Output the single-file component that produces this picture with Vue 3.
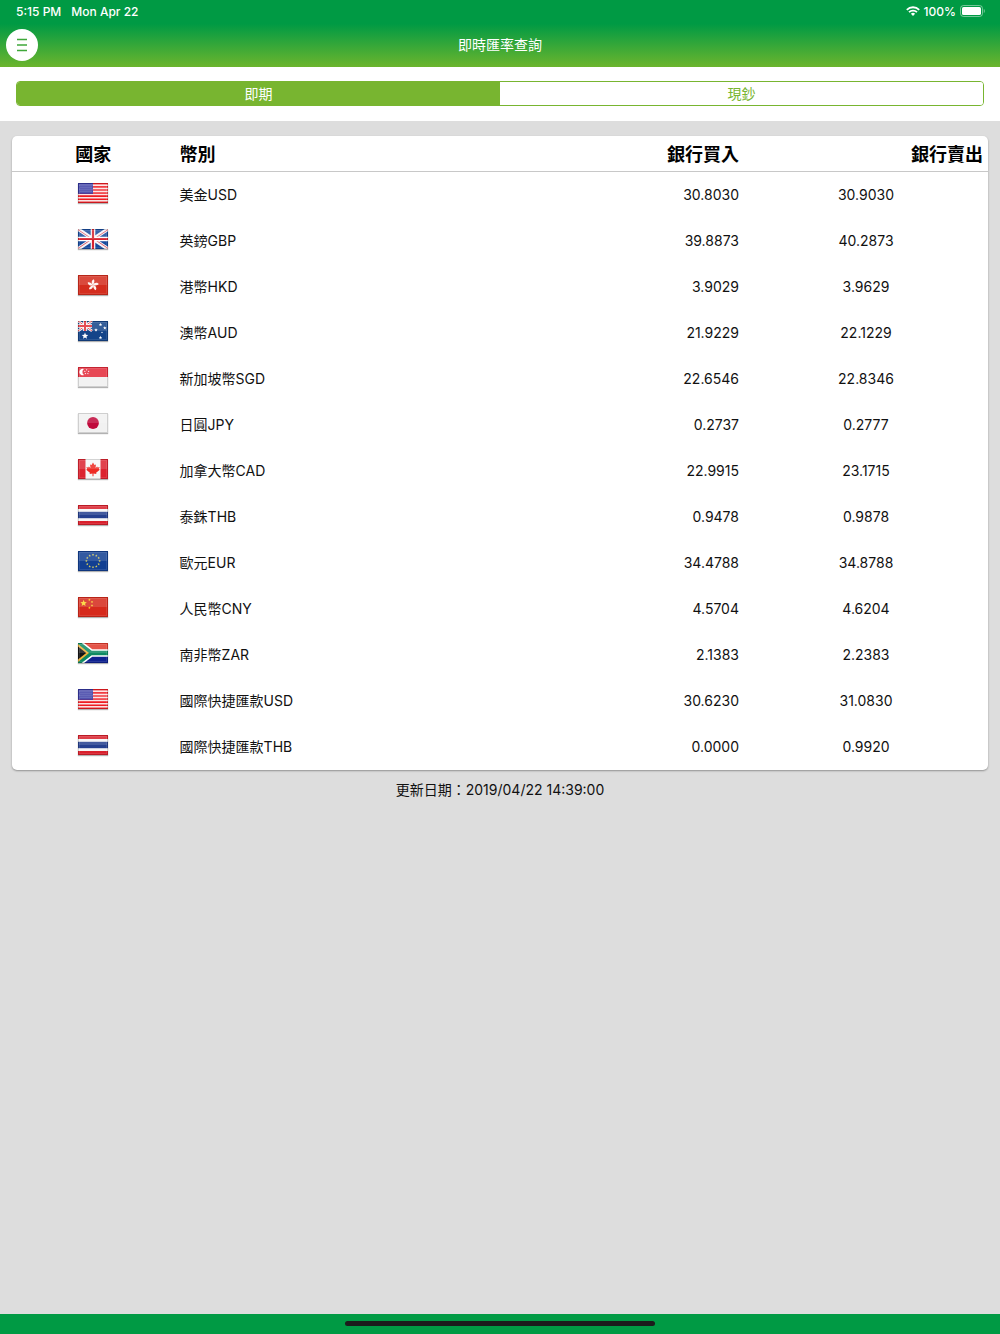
<script setup>
import { ref } from "vue"

const tabs = [
  { id: "spot", label: "即期" },
  { id: "cash", label: "現鈔" },
]
const activeTab = ref("spot")

const rates = [
  { flag: "us", name: "美金USD", buy: "30.8030", sell: "30.9030" },
  { flag: "gb", name: "英鎊GBP", buy: "39.8873", sell: "40.2873" },
  { flag: "hk", name: "港幣HKD", buy: "3.9029", sell: "3.9629" },
  { flag: "au", name: "澳幣AUD", buy: "21.9229", sell: "22.1229" },
  { flag: "sg", name: "新加坡幣SGD", buy: "22.6546", sell: "22.8346" },
  { flag: "jp", name: "日圓JPY", buy: "0.2737", sell: "0.2777" },
  { flag: "ca", name: "加拿大幣CAD", buy: "22.9915", sell: "23.1715" },
  { flag: "th", name: "泰銖THB", buy: "0.9478", sell: "0.9878" },
  { flag: "eu", name: "歐元EUR", buy: "34.4788", sell: "34.8788" },
  { flag: "cn", name: "人民幣CNY", buy: "4.5704", sell: "4.6204" },
  { flag: "za", name: "南非幣ZAR", buy: "2.1383", sell: "2.2383" },
  { flag: "us", name: "國際快捷匯款USD", buy: "30.6230", sell: "31.0830" },
  { flag: "th", name: "國際快捷匯款THB", buy: "0.0000", sell: "0.9920" },
]

const updatedAt = "2019/04/22 14:39:00"

// points of a five-pointed star
function star(cx, cy, r) {
  const points = []
  for (let i = 0; i < 10; i++) {
    const radius = i % 2 ? r * 0.45 : r
    const angle = (Math.PI / 5) * i - Math.PI / 2
    points.push(`${(cx + radius * Math.cos(angle)).toFixed(2)},${(cy + radius * Math.sin(angle)).toFixed(2)}`)
  }
  return points.join(" ")
}

const euStars = Array.from({ length: 12 }, (_, i) => {
  const angle = (Math.PI / 6) * i
  return star(15 + 6.6 * Math.cos(angle), 10 + 6.2 * Math.sin(angle), 1.3)
})
</script>

<template>
  <div class="page">
    <div class="status-bar">
      <div class="status-left">
        <span>5:15 PM</span>
        <span>Mon Apr 22</span>
      </div>
      <div class="status-right">
        <svg class="wifi" viewBox="0 0 14 10" aria-hidden="true">
          <path d="M.8 3.800a8.800 8.800 0 0 1 12.400 0M3 6.200a5.700 5.700 0 0 1 8 0" fill="none" stroke="#fff" stroke-width="1.8" />
          <path d="M7 10 4.900 7.800a3 3 0 0 1 4.200 0z" fill="#fff" />
        </svg>
        <span>100%</span>
        <svg class="battery" viewBox="0 0 25 12" aria-hidden="true">
          <rect x="0.5" y="0.5" width="22" height="11" rx="3" fill="none" stroke="#fff" stroke-opacity="0.45" />
          <rect x="2" y="2" width="19" height="8" rx="1.6" fill="#fff" />
          <path d="M23.800 4v4c1.300-.6 1.300-3.400 0-4z" fill="#fff" fill-opacity="0.5" />
        </svg>
      </div>
    </div>

    <header class="nav-bar">
      <button class="menu-btn" type="button" aria-label="選單">
        <svg viewBox="0 0 12 14" aria-hidden="true">
          <path d="M1 1.500h10M1 7h10M1 12.500h10" stroke="#3fa83a" stroke-width="1.400" />
        </svg>
      </button>
      <h1>即時匯率查詢</h1>
    </header>

    <div class="tab-bar">
      <div class="segmented">
        <button
          v-for="tab in tabs"
          :key="tab.id"
          type="button"
          class="segment"
          :class="{ active: activeTab === tab.id }"
          :aria-pressed="activeTab === tab.id"
          @click="activeTab = tab.id"
        >
          {{ tab.label }}
        </button>
      </div>
    </div>

    <main class="content">
      <div class="card">
        <table>
          <thead>
            <tr>
              <th class="country">國家</th>
              <th class="name">幣別</th>
              <th class="buy">銀行買入</th>
              <th class="sell">銀行賣出</th>
            </tr>
          </thead>
          <tbody>
            <tr v-for="rate in rates" :key="rate.name">
              <td class="country">
                <svg class="flag" viewBox="0 0 30 20" aria-hidden="true">
                  <g v-if="rate.flag === 'us'">
                    <rect width="30" height="20" fill="#fbe3e4" />
                    <path d="M0 .8h30M0 3.9h30M0 7h30M0 10h30M0 13.1h30M0 16.2h30M0 19.2h30" stroke="#ee1c22" stroke-width="1.6" />
                    <rect width="15" height="10.8" fill="#3436a0" />
                    <path d="M1.5 2.2h13M2.5 4.2h11M1.5 6.2h13M2.5 8.2h11" stroke="#8f91d0" stroke-width="0.9" stroke-dasharray="1 1" />
                  </g>
                  <g v-else-if="rate.flag === 'gb'">
                    <rect width="30" height="20" fill="#174a9c" />
                    <path d="M0 0l30 20M30 0L0 20" stroke="#f4f4f8" stroke-width="3.6" />
                    <path d="M0 .6l14 9.4M30 19.4L16 10M30 .6L16 10M0 19.4L14 10" stroke="#e0606a" stroke-width="1" />
                    <path d="M15 0v20M0 10h30" stroke="#fff" stroke-width="4.6" />
                    <path d="M15 0v20M0 10h30" stroke="#d6222e" stroke-width="2.2" />
                  </g>
                  <g v-else-if="rate.flag === 'hk'">
                    <rect width="30" height="20" fill="#d42d1e" />
                    <g fill="#fff4f0">
                      <path
                        v-for="n in 5"
                        :key="n"
                        d="M15 10C13 8.4 13.4 5 15.8 4.200 16.900 5.800 16.300 8.200 15 10z"
                        :transform="`rotate(${n * 72} 15 10)`"
                      />
                    </g>
                  </g>
                  <g v-else-if="rate.flag === 'au'">
                    <rect width="30" height="20" fill="#144489" />
                    <path d="M0 0l14 10M14 0L0 10" stroke="#fff" stroke-width="2.6" />
                    <path d="M0 0l14 10M14 0L0 10" stroke="#e0303a" stroke-width="0.9" />
                    <path d="M7 0v10M0 5h14" stroke="#fff" stroke-width="3.6" />
                    <path d="M7 0v10M0 5h14" stroke="#e0303a" stroke-width="2" />
                    <g fill="#fff">
                      <polygon :points="star(7, 15, 3.4)" />
                      <polygon :points="star(22.5, 3.6, 1.8)" />
                      <polygon :points="star(18, 9, 1.8)" />
                      <polygon :points="star(26.8, 7, 1.8)" />
                      <polygon :points="star(24, 11.4, 1)" />
                      <polygon :points="star(22.5, 16.6, 1.8)" />
                    </g>
                  </g>
                  <g v-else-if="rate.flag === 'sg'">
                    <rect width="30" height="20" fill="#f2f2f2" />
                    <rect width="30" height="10" fill="#e32b3a" />
                    <path d="M6 2a3.3 3.3 0 1 0 0 6 3.6 3.6 0 0 1 0-6z" fill="#fff" />
                    <g fill="#fff">
                      <polygon :points="star(8.6, 2.8, 0.9)" />
                      <polygon :points="star(10.6, 4.3, 0.9)" />
                      <polygon :points="star(9.9, 6.6, 0.9)" />
                      <polygon :points="star(7.4, 6.6, 0.9)" />
                      <polygon :points="star(6.8, 4.3, 0.9)" />
                    </g>
                  </g>
                  <g v-else-if="rate.flag === 'jp'">
                    <rect width="30" height="20" fill="#f1f1f1" />
                    <circle cx="15" cy="10" r="5.9" fill="#c00a3c" />
                  </g>
                  <g v-else-if="rate.flag === 'ca'">
                    <rect width="30" height="20" fill="#f6f6f6" />
                    <path d="M0 0h7.5v20H0zM22.5 0H30v20h-7.5z" fill="#dc2430" />
                    <path
                      d="M15 3.4l1.5 2.700 1.500-.7-.5 3.600 1.700-1.600.5 1 2-.3-.8 2 .9.700-3.700 3 .3 1.200-2.900-.4v2.600h-1v-2.600l-2.900.4.3-1.200-3.700-3 .9-.7-.8-2 2 .3.500-1 1.700 1.600-.5-3.600 1.500.7z"
                      fill="#ee2a24"
                    />
                  </g>
                  <g v-else-if="rate.flag === 'th'">
                    <rect width="30" height="20" fill="#f6f6f6" />
                    <path d="M0 2h30M0 18h30" stroke="#d9202c" stroke-width="4" />
                    <rect y="6.8" width="30" height="6.4" fill="#253f8e" />
                  </g>
                  <g v-else-if="rate.flag === 'eu'">
                    <rect width="30" height="20" fill="#123f92" />
                    <polygon v-for="points in euStars" :key="points" :points="points" fill="#d8cf5a" />
                  </g>
                  <g v-else-if="rate.flag === 'cn'">
                    <rect width="30" height="20" fill="#d62a1c" />
                    <g fill="#fbd62e">
                      <polygon :points="star(5.6, 6.2, 3.4)" />
                      <polygon :points="star(11.4, 2.8, 1.3)" />
                      <polygon :points="star(14, 5, 1.3)" />
                      <polygon :points="star(14, 8.4, 1.3)" />
                      <polygon :points="star(11.4, 10.8, 1.3)" />
                    </g>
                  </g>
                  <g v-else>
                    <rect width="30" height="10" fill="#e03a2c" />
                    <rect y="10" width="30" height="10" fill="#0f2290" />
                    <path d="M0 0l13 10h17M0 20l13-10" fill="none" stroke="#fff" stroke-width="7.4" />
                    <path d="M0 0l13 10L0 20z" fill="#0d8a62" />
                    <path d="M0 0l13 10h17M0 20l13-10" fill="none" stroke="#0d8a62" stroke-width="4.4" />
                    <path d="M0 1L11 10 0 19z" fill="#f0b23a" />
                    <path d="M0 3.6L8.2 10 0 16.4z" fill="#151515" />
                  </g>
                  <!-- glossy finish -->
                  <rect x="1" y="1" width="28" height="9" fill="#fff" fill-opacity="0.14" />
                  <rect x="1.5" y="1.5" width="27" height="17" fill="none" stroke="#fff" stroke-opacity="0.1" />
                  <rect x="0.5" y="0.5" width="29" height="19" fill="none" stroke="#000" stroke-opacity="0.14" />
                </svg>
              </td>
              <td class="name">{{ rate.name }}</td>
              <td class="buy">{{ rate.buy }}</td>
              <td class="sell">{{ rate.sell }}</td>
            </tr>
          </tbody>
        </table>
      </div>
      <p class="updated">更新日期：{{ updatedAt }}</p>
    </main>

    <footer class="home-bar">
      <div class="home-indicator"></div>
    </footer>
  </div>
</template>

<style>
body {
  margin: 0;
  background: #ddd;
}
</style>

<style scoped>
.page {
  display: flex;
  flex-direction: column;
  min-height: 100vh;
  background: #ddd;
  color: #111;
  font-family: Inter, "Noto Sans CJK TC", sans-serif;
  font-size: 14px;
}

.status-bar {
  display: flex;
  justify-content: space-between;
  align-items: center;
  height: 22px;
  padding: 0 15px 2px 16px;
  background: #009a44;
  color: #fff;
  font-size: 12px;
  font-weight: 500;
}

.status-left {
  display: flex;
  gap: 10px;
}

.status-right {
  display: flex;
  align-items: center;
  gap: 4px;
}

.wifi {
  width: 14px;
  height: 10px;
}

.battery {
  width: 25px;
  height: 12px;
}

.nav-bar {
  display: grid;
  grid-template-columns: 32px 1fr 32px;
  align-items: center;
  height: 41px;
  padding: 0 6px 2px;
  background: linear-gradient(#009a44, #6cb52d);
}

.menu-btn {
  display: flex;
  align-items: center;
  justify-content: center;
  width: 32px;
  height: 32px;
  padding: 0;
  border: none;
  border-radius: 50%;
  background: #fff;
  cursor: pointer;
}

.menu-btn svg {
  width: 12px;
  height: 14px;
}

h1 {
  margin: 0;
  color: #fff;
  font-size: 14px;
  font-weight: 400;
  line-height: 20px;
  text-align: center;
}

.tab-bar {
  padding: 14px 16px 15px;
  background: #fff;
}

.segmented {
  display: flex;
  height: 25px;
  box-sizing: border-box;
  border: 1px solid #78b530;
  border-radius: 4px;
  overflow: hidden;
}

.segment {
  flex: 1;
  padding: 0;
  border: none;
  background: #fff;
  color: #78b530;
  font: inherit;
  line-height: 22px;
  cursor: pointer;
}

.segment.active {
  background: #78b530;
  color: #fff;
}

.content {
  flex: 1;
  padding: 15px 12px;
}

.card {
  border-radius: 5px;
  background: #fff;
  box-shadow: 0 1px 2px rgba(0, 0, 0, 0.35);
}

table {
  width: 100%;
  table-layout: fixed;
  border-collapse: separate;
  border-spacing: 0;
}

th {
  height: 36px;
  box-sizing: border-box;
  padding: 2px 5px 0;
  border-bottom: 1px solid #c8c8c8;
  color: #000;
  font-size: 18px;
  font-weight: 700;
  line-height: 24px;
}

td {
  height: 46px;
  box-sizing: border-box;
  padding: 0 5px;
  line-height: 20px;
}

.country {
  width: 16.66%;
  text-align: center;
}

td.country {
  padding-bottom: 4px;
}

.name {
  text-align: left;
}

.buy {
  width: 25%;
  text-align: right;
}

.sell {
  width: 25%;
  text-align: center;
}

th.sell {
  text-align: right;
}

.flag {
  display: block;
  width: 30px;
  height: 20px;
  margin: 0 auto;
  box-shadow: 0 1px 1px rgba(0, 0, 0, 0.3);
}

.updated {
  margin: 10px 0 0;
  line-height: 20px;
  text-align: center;
}

.home-bar {
  display: flex;
  align-items: center;
  justify-content: center;
  height: 19px;
  padding-bottom: 1px;
  background: #009a44;
}

.home-indicator {
  width: 31%;
  height: 5px;
  border-radius: 3px;
  background: #1c1c1c;
}
</style>
